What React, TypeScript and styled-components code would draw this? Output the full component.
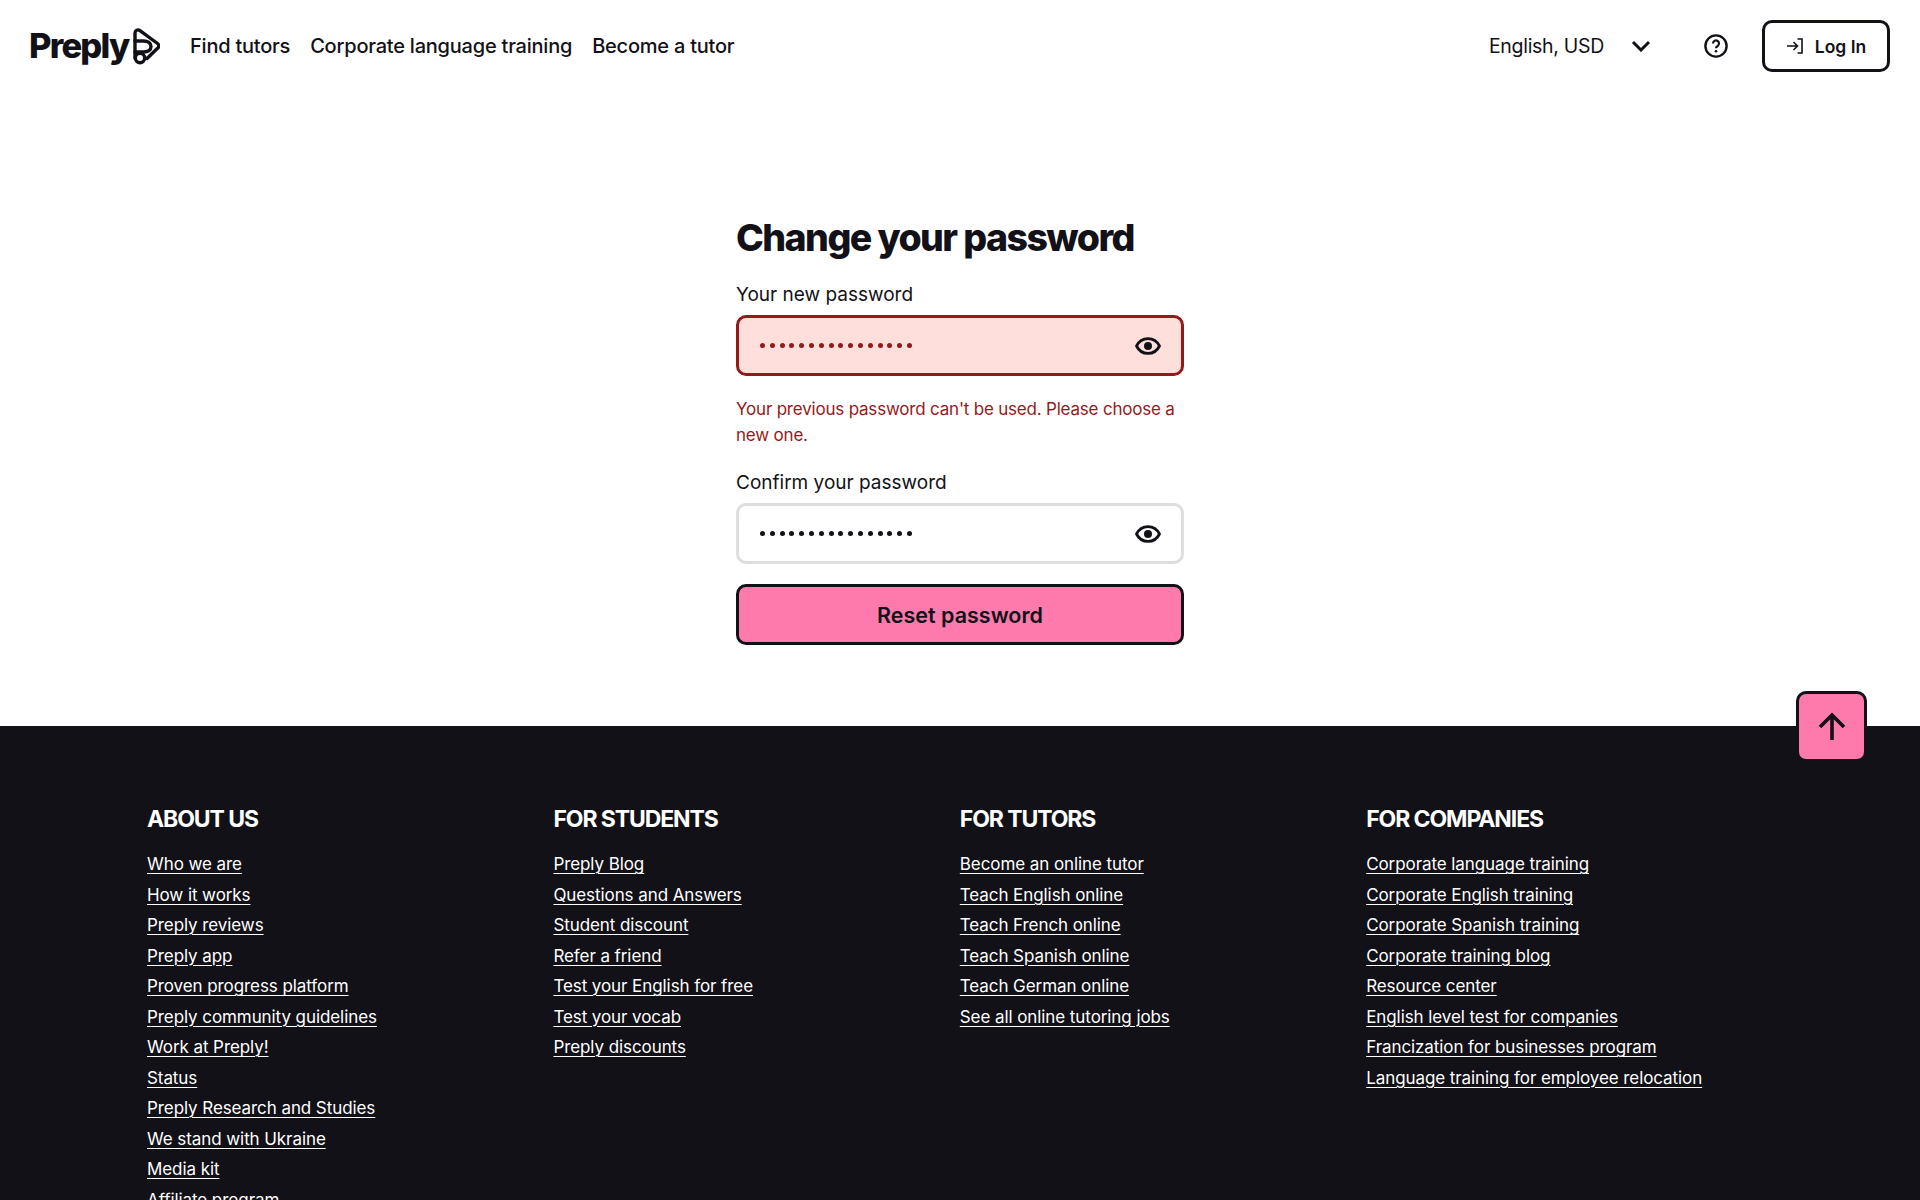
import { FC } from 'react';
import styled, { createGlobalStyle } from 'styled-components';

const GlobalStyle = createGlobalStyle`
html, body {
  margin:0;
  padding:0;
  height:100%;
  overflow:hidden;
  background:#fff;
}
* { box-sizing:border-box; }
`;

const FONT = `"Inter", "Noto Sans", sans-serif`;
const DARK = '#121117';
const PINK = '#ff7aac';
const RED = '#941a1a';

/*----------Page--------------------*/
const Page = styled.div`
display:flex;
flex-direction:column;
height:1200px;
overflow:hidden;
font-family:${FONT};
color:${DARK};
`;

/*----------Header--------------------*/
const Header = styled.header`
display:flex;
align-items:center;
height:92px;
padding:0 30px 0 29px;
flex-shrink:0;
`;
const Logo = styled.div`
display:flex;
align-items:center;
gap:5px;
width:161px;
`;
const LogoText = styled.span`
font-size:34.5px;
font-weight:800;
letter-spacing:-1.8px;
line-height:1;
`;
const Nav = styled.nav`
display:flex;
gap:20px;
`;
const NavLink = styled.a`
font-size:20px;
font-weight:500;
letter-spacing:-0.22px;
color:${DARK};
`;
const HeaderRight = styled.div`
display:flex;
align-items:center;
margin-left:auto;
`;
const Locale = styled.span`
font-size:19.5px;
font-weight:400;
letter-spacing:-0.3px;
margin-right:27px;
`;
const HelpIcon = styled.div`
display:flex;
margin:0 34px 0 53px;
`;
const LoginButton = styled.button`
display:flex;
align-items:center;
justify-content:center;
gap:11px;
width:128px;
height:52px;
background:#fff;
border:3px solid ${DARK};
border-radius:10px;
font-family:${FONT};
font-size:17.5px;
font-weight:600;
color:${DARK};
`;

/*----------Form--------------------*/
const Main = styled.main`
display:flex;
justify-content:center;
height:634px;
flex-shrink:0;
position:relative;
`;
const Form = styled.div`
display:flex;
flex-direction:column;
width:448px;
padding-top:120px;
`;
const Heading = styled.h1`
margin:0 0 19px;
font-size:37.5px;
line-height:52px;
font-weight:800;
letter-spacing:-1.55px;
`;
const Label = styled.label`
display:block;
font-size:19px;
line-height:24px;
margin-bottom:8px;
`;
const InputBox = styled.div<{ $error?: boolean }>`
display:flex;
align-items:center;
justify-content:space-between;
height:61px;
padding:0 19px 0 21px;
border-radius:10px;
border:3px solid ${p => (p.$error ? RED : '#dedede')};
background:${p => (p.$error ? '#ffdfdc' : '#fff')};
color:${p => (p.$error ? RED : DARK)};
`;
const Dots = styled.div`
display:flex;
gap:4.8px;
`;
const Dot = styled.i`
display:block;
width:5px;
height:5px;
border-radius:50%;
background:currentColor;
`;
const ErrorText = styled.p`
margin:20px 0 23px;
font-size:17px;
line-height:26px;
letter-spacing:-0.2px;
color:${RED};
`;
const ResetButton = styled.button`
height:61px;
margin-top:20px;
background:${PINK};
border:3px solid ${DARK};
border-radius:10px;
font-family:${FONT};
font-size:21.5px;
font-weight:600;
color:${DARK};
`;
const ScrollTop = styled.button`
position:absolute;
right:53px;
bottom:-36px;
width:71px;
height:71px;
display:flex;
align-items:center;
justify-content:center;
background:${PINK};
border:3px solid ${DARK};
border-radius:10px;
z-index:1;
`;

/*----------Footer--------------------*/
const Footer = styled.footer`
flex:1;
background:${DARK};
padding:75px 147px 0;
display:grid;
grid-template-columns:repeat(4, 406.4px);
align-items:start;
`;
const Column = styled.div`
display:flex;
flex-direction:column;
`;
const ColumnTitle = styled.h4`
margin:0 0 12px;
font-size:23px;
line-height:36px;
font-weight:700;
letter-spacing:-1.1px;
color:#fff;
`;
const FooterLink = styled.a`
font-size:17px;
line-height:30.5px;
letter-spacing:-0.08px;
color:#fff;
text-decoration:underline;
text-decoration-thickness:1px;
text-underline-offset:3px;
`;

const columns: { title: string; links: string[] }[] = [
    {
        title: 'ABOUT US',
        links: ['Who we are', 'How it works', 'Preply reviews', 'Preply app', 'Proven progress platform', 'Preply community guidelines', 'Work at Preply!', 'Status', 'Preply Research and Studies', 'We stand with Ukraine', 'Media kit', 'Affiliate program'],
    },
    {
        title: 'FOR STUDENTS',
        links: ['Preply Blog', 'Questions and Answers', 'Student discount', 'Refer a friend', 'Test your English for free', 'Test your vocab', 'Preply discounts'],
    },
    {
        title: 'FOR TUTORS',
        links: ['Become an online tutor', 'Teach English online', 'Teach French online', 'Teach Spanish online', 'Teach German online', 'See all online tutoring jobs'],
    },
    {
        title: 'FOR COMPANIES',
        links: ['Corporate language training', 'Corporate English training', 'Corporate Spanish training', 'Corporate training blog', 'Resource center', 'English level test for companies', 'Francization for businesses program', 'Language training for employee relocation'],
    },
];

const EyeIcon: FC = () => (
    <svg width="28" height="28" viewBox="0 0 28 28" fill="none" color={DARK}>
        <path d="M2.500 14C5 9 9.200 6.600 14 6.600S23 9 25.500 14C23 19 18.800 21.400 14 21.400S5 19 2.500 14Z" stroke="currentColor" strokeWidth="2.800" strokeLinejoin="round" />
        <circle cx="14" cy="14" r="4" fill="currentColor" />
    </svg>
);

const PasswordDots: FC = () => (
    <Dots>
        {Array.from({ length: 16 }).map((_, i) => <Dot key={i} />)}
    </Dots>
);

const App: FC = () => {
    return (
        <Page>
            <GlobalStyle />
            <Header>
                <Logo>
                    <LogoText>Preply</LogoText>
                    <svg width="27" height="37" viewBox="0 0 27 37" fill="none" stroke={DARK} strokeWidth="3.400" strokeLinejoin="round" strokeLinecap="round">
                        <path d="M2 30V5C2 2.300 4.800 1 7 2.600L24.500 15.500c1.700 1.300 1.700 3.500 0 4.800L14 30.500" />
                        <path d="M2 13H10.500C15 13 18 15 18 18.500S15 24 10.500 24H2" />
                        <circle cx="7" cy="30" r="4.700" />
                    </svg>
                </Logo>
                <Nav>
                    <NavLink>Find tutors</NavLink>
                    <NavLink>Corporate language training</NavLink>
                    <NavLink>Become a tutor</NavLink>
                </Nav>
                <HeaderRight>
                    <Locale>English, USD</Locale>
                    <svg width="20" height="12" viewBox="0 0 20 12" fill="none" stroke={DARK} strokeWidth="3">
                        <path d="M2 2l8 8 8-8" />
                    </svg>
                    <HelpIcon>
                        <svg width="24" height="24" viewBox="0 0 24 24" fill="none" stroke={DARK} strokeWidth="2.400">
                            <circle cx="12" cy="12" r="10.600" />
                            <path d="M9 9.500a3 3 0 1 1 4.600 2.500c-1 .6-1.600 1.200-1.600 2.300" strokeWidth="2.200" />
                            <circle cx="12" cy="17.300" r="1.300" fill={DARK} stroke="none" />
                        </svg>
                    </HelpIcon>
                    <LoginButton>
                        <svg width="18" height="18" viewBox="0 0 18 18" fill="none" stroke={DARK} strokeWidth="1.600">
                            <path d="M1 9h10M7.500 5l4 4-4 4M11.500 2H16v14h-4.500" />
                        </svg>
                        Log In
                    </LoginButton>
                </HeaderRight>
            </Header>

            <Main>
                <Form>
                    <Heading>Change your password</Heading>
                    <Label>Your new password</Label>
                    <InputBox $error>
                        <PasswordDots />
                        <EyeIcon />
                    </InputBox>
                    <ErrorText>Your previous password can't be used. Please choose a new one.</ErrorText>
                    <Label>Confirm your password</Label>
                    <InputBox>
                        <PasswordDots />
                        <EyeIcon />
                    </InputBox>
                    <ResetButton>Reset password</ResetButton>
                </Form>
                <ScrollTop>
                    <svg width="32" height="32" viewBox="0 0 32 32" fill="none" stroke={DARK} strokeWidth="3.600">
                        <path d="M16 29V5M4 16L16 4l12 12" />
                    </svg>
                </ScrollTop>
            </Main>

            <Footer>
                {columns.map(col => (
                    <Column key={col.title}>
                        <ColumnTitle>{col.title}</ColumnTitle>
                        {col.links.map(link => <FooterLink key={link}>{link}</FooterLink>)}
                    </Column>
                ))}
            </Footer>
        </Page>
    );
};

export default App;
